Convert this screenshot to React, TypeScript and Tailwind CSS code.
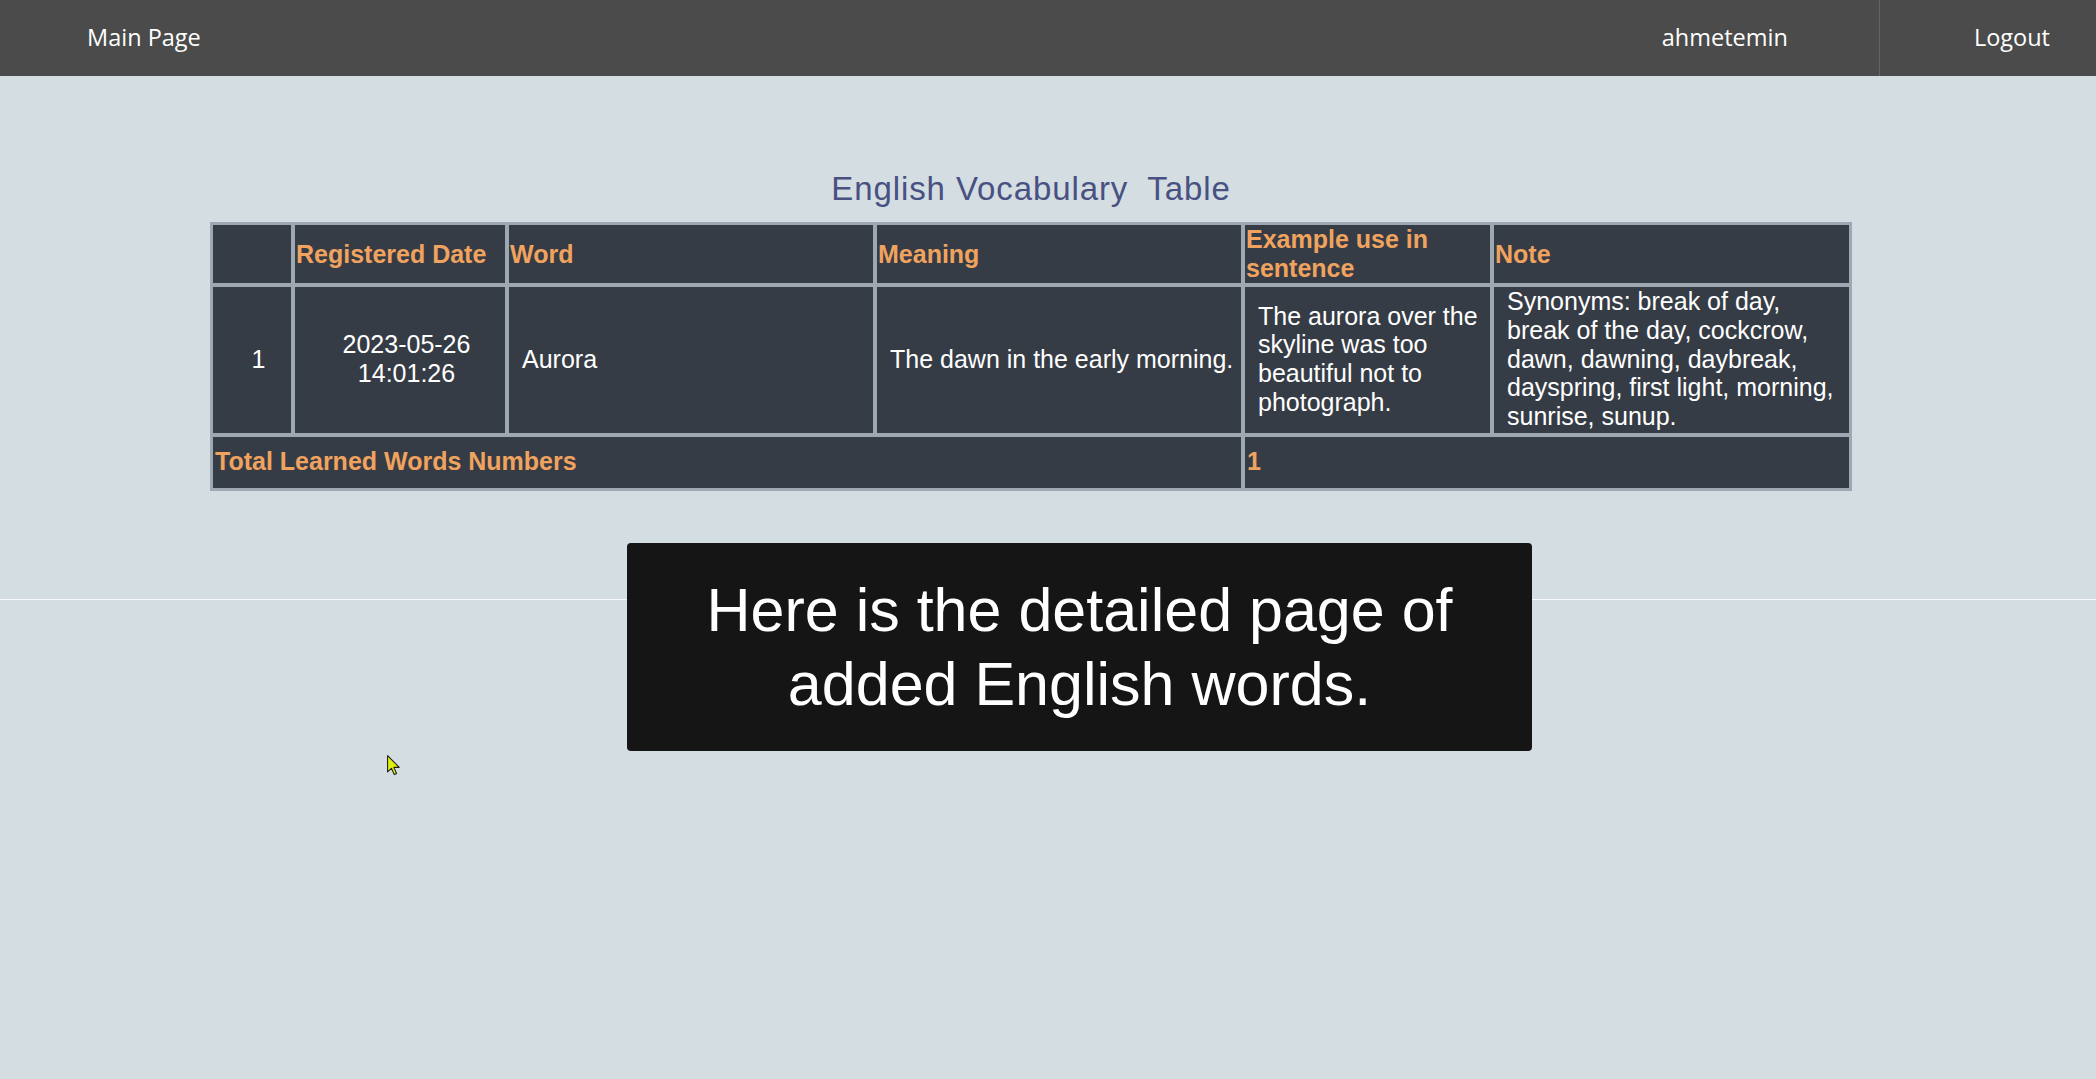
export default function App() {
  const head = "flex items-center px-[1px] bg-[#363c45] font-bold text-[#f0a35f] h-[58px]";
  const data = "flex items-center pl-[13px] pb-[2px] bg-[#363c45] text-white h-[146px] whitespace-nowrap";
  const foot = "flex items-center px-[2px] pb-[2px] bg-[#363c45] font-bold text-[#f0a35f] h-[51px]";
  return (
    <div className="relative min-h-screen bg-[#d3dde2] font-['Liberation_Sans',Arial,sans-serif]">
      <nav className="flex h-[76px] items-stretch justify-between bg-[#4b4b4b] font-['Open_Sans',sans-serif] text-[23.5px] text-white">
        <div className="flex items-center pl-[87px]">Main Page</div>
        <div className="flex items-stretch">
          <div className="flex items-center pr-[91px]">ahmetemin</div>
          <div className="w-px bg-[#646464]" />
          <div className="flex items-center pl-[94px] pr-[46px]">Logout</div>
        </div>
      </nav>
      <main className="pt-[94px]">
        <div className="ml-[210px] w-[1642px]">
          <h2 className="mb-[14px] text-center text-[33px] leading-[38px] tracking-[0.9px] text-[#485181]">
            English Vocabulary <span className="ml-[9px]">Table</span>
          </h2>
          <div className="grid grid-cols-[78px_210px_364px_364px_245px_355px] gap-[4px] bg-[#9da8b3] p-[3px] text-[25px] leading-[28.75px]">
            <div className={head}></div>
            <div className={head}>Registered Date</div>
            <div className={head}>Word</div>
            <div className={head}>Meaning</div>
            <div className={head}>
              <span>
                Example use in
                <br />
                sentence
              </span>
            </div>
            <div className={head}>Note</div>

            <div className={`${data} justify-center`}>1</div>
            <div className={`${data} justify-center text-center`}>
              <span>
                2023-05-26
                <br />
                14:01:26
              </span>
            </div>
            <div className={data}>Aurora</div>
            <div className={data}>The dawn in the early morning.</div>
            <div className={data}>
              <span>
                The aurora over the
                <br />
                skyline was too
                <br />
                beautiful not to
                <br />
                photograph.
              </span>
            </div>
            <div className={data}>
              <span>
                Synonyms: break of day,
                <br />
                break of the day, cockcrow,
                <br />
                dawn, dawning, daybreak,
                <br />
                dayspring, first light, morning,
                <br />
                sunrise, sunup.
              </span>
            </div>

            <div className={`${foot} col-span-4`}>Total Learned Words Numbers</div>
            <div className={`${foot} col-span-2`}>1</div>
          </div>
        </div>
        <div className="mt-[108px] h-px bg-[#f7f9fa]" />
      </main>

      <div className="absolute left-[627px] top-[543px] flex h-[208px] w-[905px] items-center justify-center rounded-[4px] bg-[#151515] text-center text-[61px] leading-[74px] text-white">
        <span>
          Here is the detailed page of
          <br />
          added English words.
        </span>
      </div>

      <svg
        className="absolute left-[387px] top-[755px]"
        width="14"
        height="21"
        viewBox="0 0 12 18"
      >
        <path
          d="M0.5 0.5 L0.5 14.5 L3.8 11.4 L6.2 16.8 L8.2 15.9 L5.9 10.6 L10.5 10.6 Z"
          fill="#dfee12"
          stroke="#1c1c1c"
          strokeWidth="0.9"
          strokeLinejoin="round"
        />
      </svg>
    </div>
  );
}
